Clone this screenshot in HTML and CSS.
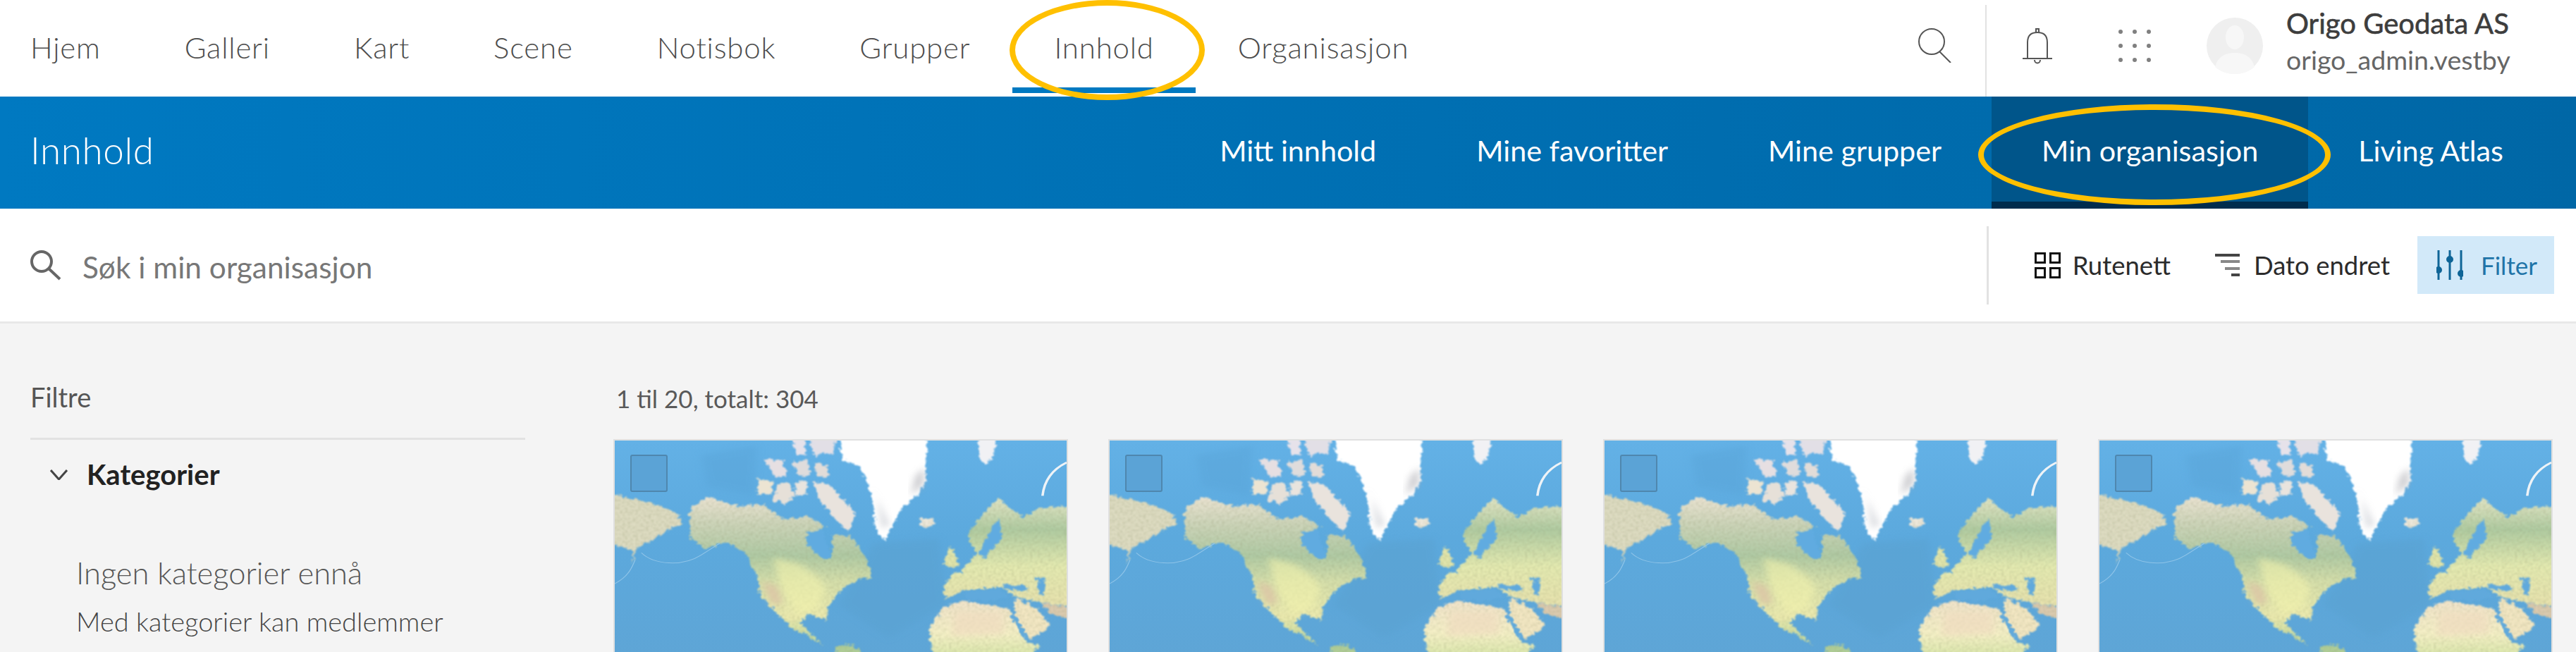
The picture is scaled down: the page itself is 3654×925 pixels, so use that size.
FILE: index.html
```html
<!DOCTYPE html>
<html lang="no">
<head>
    <meta charset="UTF-8">
    <title>Innhold</title>
    <link rel="stylesheet" href="styles.css">
</head>
<body>

    <!-- shared map thumbnail -->
    <svg class="defs" aria-hidden="true">
        <defs>
            <linearGradient id="ocean" x1="0" y1="0" x2="0" y2="1">
                <stop offset="0" stop-color="#63b1e6"/>
                <stop offset="0.45" stop-color="#5ca9dd"/>
                <stop offset="1" stop-color="#5ea5d6"/>
            </linearGradient>
            <linearGradient id="land-north" gradientUnits="userSpaceOnUse" x1="0" y1="300" x2="0" y2="900">
                <stop offset="0" stop-color="#efe6d6"/>
                <stop offset="0.2" stop-color="#cdd5ba"/>
                <stop offset="0.42" stop-color="#b0cba5"/>
                <stop offset="0.6" stop-color="#d6e0ac"/>
                <stop offset="0.85" stop-color="#eeecb0"/>
                <stop offset="1" stop-color="#c6dba0"/>
            </linearGradient>
            <linearGradient id="land-east" gradientUnits="userSpaceOnUse" x1="0" y1="330" x2="0" y2="780">
                <stop offset="0" stop-color="#dde3c2"/>
                <stop offset="0.25" stop-color="#b0cca2"/>
                <stop offset="0.6" stop-color="#e6ecb2"/>
                <stop offset="1" stop-color="#e9e2ae"/>
            </linearGradient>
            <linearGradient id="land-africa" gradientUnits="userSpaceOnUse" x1="0" y1="740" x2="0" y2="975">
                <stop offset="0" stop-color="#f3e5cd"/>
                <stop offset="0.6" stop-color="#f7f2c8"/>
                <stop offset="1" stop-color="#dbe8ac"/>
            </linearGradient>
            <filter id="rough" x="-5%" y="-5%" width="110%" height="110%" color-interpolation-filters="sRGB">
                <feTurbulence type="fractalNoise" baseFrequency="0.07" numOctaves="4" seed="4" result="noise"/>
                <feDisplacementMap in="SourceGraphic" in2="noise" scale="26" xChannelSelector="R" yChannelSelector="G"/>
                <feGaussianBlur stdDeviation="2.600"/>
            </filter>
            <filter id="mottled" x="-5%" y="-5%" width="110%" height="110%" color-interpolation-filters="sRGB">
                <feTurbulence type="fractalNoise" baseFrequency="0.07" numOctaves="4" seed="4" result="noise"/>
                <feDisplacementMap in="SourceGraphic" in2="noise" scale="26" xChannelSelector="R" yChannelSelector="G" result="shape"/>
                <feTurbulence type="fractalNoise" baseFrequency="0.12" numOctaves="2" seed="9"/>
                <feColorMatrix type="matrix" values="0 0 0 0 0.55  0 0 0 0 0.57  0 0 0 0 0.42  0.700 0 0 0 -0.280" result="specks"/>
                <feComposite in="specks" in2="shape" operator="in" result="spots"/>
                <feMerge result="merged">
                    <feMergeNode in="shape"/>
                    <feMergeNode in="spots"/>
                </feMerge>
                <feGaussianBlur in="merged" stdDeviation="2.600"/>
            </filter>
            <filter id="soft" x="-20%" y="-20%" width="140%" height="140%">
                <feGaussianBlur stdDeviation="12"/>
            </filter>
            <symbol id="world-map" viewBox="25 68 1442 907" preserveAspectRatio="none">
                <rect x="25" y="68" width="1442" height="907" fill="url(#ocean)"/>
                <path d="M300 130 L480 90 L470 300 L320 260 Z" fill="#5aa5d9" opacity="0.5" filter="url(#soft)"/>
                <path d="M850 500 1060 480 1080 760 900 900 740 760Z" fill="#5aa2d2" opacity="0.6" filter="url(#soft)"/>
                <g filter="url(#rough)">
                    <!-- arctic islands -->
                    <path d="M585 30H625L640 130 605 125Z" fill="#e6e2ea"/>
                    <path d="M645 30H735L722 125 690 120 660 140Z" fill="#e2dfe6"/>
                    <path d="M505 150 560 145 575 215 535 220Z" fill="#e6dfe2"/>
                    <path d="M590 160 640 150 650 215 610 215Z" fill="#dfdcdc"/>
                    <path d="M660 165 705 170 708 222 670 220Z" fill="#e2dcd8"/>
                    <path d="M482 228 530 240 525 295 480 290Z" fill="#ece4d2"/>
                    <path d="M545 250 585 245 600 300 570 335 530 320Z" fill="#e6e0d8"/>
                    <path d="M600 245 640 235 635 295 605 300Z" fill="#e9e4de"/>
                    <path d="M655 240 705 250 770 340 795 382 770 450 730 400 680 320Z" fill="#e9e3dd"/>
                    <path d="M1182 30H1240L1238 135 1200 170 1188 120Z" fill="#f1f1f4"/>
                    <!-- greenland -->
                    <path d="M750 30H1022L1018 150 1018 240 988 300 948 340 912 420 885 490 858 440 848 320 825 220 795 170 755 150 745 110Z" fill="#ffffff"/>
                </g>
                <g filter="url(#mottled)">
                    <!-- north america -->
                    <path d="M268 345 325 305 420 345 500 335 560 400 640 385 700 430 635 480 690 560 715 565 722 462 780 470 830 570 845 640 800 655 745 700 705 765 702 825 640 795 618 835 650 880 692 935 640 885 590 860 530 775 490 725 480 640 440 540 380 492 320 525 270 485 262 410Z" fill="url(#land-north)"/>
                    <path d="M720 1010 730 935 785 925 850 1010Z" fill="#b0cf98"/>
                    <!-- east asia on the left edge -->
                    <path d="M-10 280 70 310 150 330 222 372 240 415 190 450 140 492 100 515 78 592 85 530 -10 492Z" fill="#dedcc2"/>
                    <!-- iceland -->
                    <path d="M1000 395 1042 395 1045 420 1020 440 1000 420Z" fill="#efe9dc"/>
                    <!-- eurasia -->
                    <path d="M1500 340 1380 350 1330 392 1250 310 1200 372 1150 470 1180 540 1130 620 1100 632 1072 690 1082 735 1135 700 1260 682 1300 722 1380 750 1500 770Z" fill="url(#land-east)"/>
                    <path d="M1072 590 1095 510 1125 590 1105 602Z" fill="#e2e6ac"/>
                    <!-- africa and arabia -->
                    <path d="M1030 860 1072 770 1140 740 1285 775 1295 820 1340 915 1378 930 1330 1010H1050L1030 910Z" fill="url(#land-africa)"/>
                    <path d="M1302 730 1370 770 1418 850 1350 905 1300 810Z" fill="#f4e8c4"/>
                    <path d="M1390 752 1500 775V825L1410 795Z" fill="#dccbb0"/>
                </g>
                <!-- colour inside the continents -->
                <path d="M530 560 620 590 680 650 700 700 670 780 610 800 560 710Z" fill="#f3f3ad" opacity="0.6" filter="url(#soft)"/>
                <path d="M495 660 540 680 560 750 530 760Z" fill="#dcc7a6" filter="url(#soft)"/>
                <path d="M860 300 880 440 900 420 845 260Z" fill="#b8bcc4" opacity="0.6" filter="url(#soft)"/>
                <path d="M985 220 1012 180 1010 250 970 300Z" fill="#a8a8ae" opacity="0.6" filter="url(#soft)"/>
                <path d="M1110 790 1260 790 1270 880 1100 890Z" fill="#f0dcc0" opacity="0.7" filter="url(#soft)"/>
                <g filter="url(#rough)">
                    <path d="M640 450 690 440 715 560 690 570 640 510Z" fill="#60abe0"/>
                    <path d="M1232 425 1252 400 1262 480 1205 560 1185 545Z" fill="#60abe0"/>
                    <path d="M1140 705 1250 690 1290 725 1210 745 1150 735Z" fill="#60a9dc"/>
                    <path d="M1265 672 1340 680 1340 700 1270 695Z" fill="#60a9dc"/>
                    <path d="M1372 640 1400 650 1392 722 1376 700Z" fill="#60a9dc"/>
                    <path d="M1292 805 1300 800 1345 905 1335 910Z" fill="#60a9dc"/>
                </g>
                <path d="M1467 160C1420 190 1395 240 1390 300" fill="none" stroke="#eef3f7" stroke-width="8"/>
                <path d="M25 670C70 640 80 600 90 570M110 540C150 590 240 600 300 550L360 500" fill="none" stroke="#8fc4e8" stroke-width="3"/>
            </symbol>
        </defs>
    </svg>

    <header class="top-bar">
        <nav class="top-nav">
            <a href="#">Hjem</a>
            <a href="#">Galleri</a>
            <a href="#">Kart</a>
            <a href="#">Scene</a>
            <a href="#">Notisbok</a>
            <a href="#">Grupper</a>
            <a href="#" class="active">Innhold</a>
            <a href="#">Organisasjon</a>
        </nav>
        <div class="top-tools">
            <svg class="icon-search" viewBox="0 0 48 49"><circle cx="20" cy="19" r="18"/><path d="M31 33 47 49"/></svg>
            <span class="tool-divider"></span>
            <svg class="icon-bell" viewBox="0 0 44 52"><path d="M8 43V21C8 11 14 7 22 7S36 11 36 21V43M1 44H43M18 46C18 52 26 52 26 46M20 7V2H24V7"/></svg>
            <svg class="icon-apps" viewBox="0 0 46 46"><circle cx="3" cy="3" r="3"/><circle cx="23" cy="3" r="3"/><circle cx="43" cy="3" r="3"/><circle cx="3" cy="23" r="3"/><circle cx="23" cy="23" r="3"/><circle cx="43" cy="23" r="3"/><circle cx="3" cy="43" r="3"/><circle cx="23" cy="43" r="3"/><circle cx="43" cy="43" r="3"/></svg>
            <svg class="avatar" viewBox="0 0 80 80"><circle cx="40" cy="40" r="40" fill="#efefef"/><ellipse cx="40" cy="28" rx="13" ry="17" fill="#f7f7f7"/><path d="M12 70C16 54 28 50 40 50S64 54 68 70C60 77 50 80 40 80S20 77 12 70Z" fill="#f7f7f7"/></svg>
            <div class="user">
                <div class="user-name">Origo Geodata AS</div>
                <div class="user-id">origo_admin.vestby</div>
            </div>
        </div>
    </header>

    <div class="sub-bar">
        <div class="sub-title">Innhold</div>
        <nav class="sub-nav">
            <a href="#">Mitt innhold</a>
            <a href="#">Mine favoritter</a>
            <a href="#">Mine grupper</a>
            <a href="#" class="active">Min organisasjon</a>
            <a href="#">Living Atlas</a>
        </nav>
    </div>

    <div class="toolbar">
        <div class="search">
            <svg class="icon-find" viewBox="0 0 46 44"><circle cx="17" cy="17" r="14"/><path d="M27 27 43 42"/></svg>
            <span>Søk i min organisasjon</span>
        </div>
        <div class="view-tools">
            <span class="view-divider"></span>
            <a href="#" class="view-btn grid">
                <svg class="icon-tiles" viewBox="0 0 37 37"><rect x="1.500" y="1.500" width="13" height="13"/><rect x="22.500" y="1.500" width="13" height="13"/><rect x="1.500" y="22.500" width="13" height="13"/><rect x="22.500" y="22.500" width="13" height="13"/></svg>
                Rutenett
            </a>
            <a href="#" class="view-btn sort">
                <svg class="icon-sort" viewBox="0 0 35 32"><path d="M0 2H35" stroke="#444"/><path d="M8 11H35" stroke="#888"/><path d="M14 21H35" stroke="#888"/><path d="M23 30H35" stroke="#444"/></svg>
                Dato endret
            </a>
            <a href="#" class="view-btn filter">
                <svg class="icon-filter" viewBox="0 0 38 42"><path d="M3 0V42M19 0V42M35 0V42"/><circle cx="3" cy="28" r="3.500"/><circle cx="19" cy="13" r="3.500"/><circle cx="35" cy="33" r="3.500"/></svg>
                Filter
            </a>
        </div>
    </div>

    <main class="page">
        <aside class="filters">
            <h3>Filtre</h3>
            <div class="filter-head">
                <svg class="icon-chevron" viewBox="0 0 25 15"><path d="M1 1 12.500 14 24 1"/></svg>
                <span>Kategorier</span>
            </div>
            <p class="empty-title">Ingen kategorier ennå</p>
            <p class="empty-text">Med kategorier kan medlemmer</p>
        </aside>
        <section class="results">
            <div class="count">1 til 20, totalt: 304</div>
            <div class="cards">
                <div class="card"><svg class="map"><use href="#world-map"/></svg><span class="check"></span></div>
                <div class="card"><svg class="map"><use href="#world-map"/></svg><span class="check"></span></div>
                <div class="card"><svg class="map"><use href="#world-map"/></svg><span class="check"></span></div>
                <div class="card"><svg class="map"><use href="#world-map"/></svg><span class="check"></span></div>
            </div>
        </section>
    </main>

    <!-- yellow hand-drawn callouts -->
    <span class="callout callout-nav"></span>
    <span class="callout callout-sub"></span>

</body>
</html>
```

FILE: styles.css
```css
/* General */
html, body {
    margin: 0;
    height: 925px;
    overflow: hidden;
}

body {
    position: relative;
    font-family: 'Lato', sans-serif;
    font-weight: 300;
    background: #f4f4f4;
    color: #4c4c4c;
}

a {
    color: inherit;
    text-decoration: none;
}

.defs {
    position: absolute;
    width: 0;
    height: 0;
}

/* Top bar */
.top-bar {
    display: flex;
    justify-content: space-between;
    align-items: center;
    box-sizing: border-box;
    height: 137px;
    padding-left: 43px;
    background: #fff;
}

.top-nav {
    display: flex;
    gap: 119px;
    font-size: 42px;
    letter-spacing: 0.8px;
}

.top-nav a {
    position: relative;
    margin-top: -4px;
}

.top-nav a.active::after {
    content: "";
    position: absolute;
    left: -59px;
    right: -59px;
    bottom: -40px;
    height: 8px;
    background: #0079c1;
}

.top-tools {
    display: flex;
    align-items: center;
    box-sizing: border-box;
    height: 100%;
    padding-bottom: 8px;
}

.top-tools svg {
    flex: none;
    fill: none;
    stroke: #555;
    stroke-width: 2;
}

.icon-search {
    width: 48px;
    height: 49px;
    margin-right: 48px;
}

.tool-divider {
    align-self: flex-start;
    width: 2px;
    height: 130px;
    margin-top: 7px;
    background: #e2e2e2;
}

.icon-bell {
    width: 44px;
    height: 52px;
    margin-left: 50px;
}

.top-tools .icon-apps {
    width: 46px;
    height: 46px;
    margin-left: 93px;
    fill: #808080;
    stroke: none;
}

.top-tools .avatar {
    width: 80px;
    height: 80px;
    margin-left: 79px;
    stroke: none;
}

.user {
    align-self: flex-start;
    box-sizing: border-box;
    width: 444px;
    padding: 8px 0 0 33px;
}

.user-name {
    font-size: 40px;
    font-weight: 400;
    color: #3d3d3d;
    line-height: 50px;
    -webkit-text-stroke: 0.6px #3d3d3d;
}

.user-id {
    font-size: 37.500px;
    font-weight: 400;
    color: #666;
    line-height: 54px;
}

/* Blue bar */
.sub-bar {
    display: flex;
    justify-content: space-between;
    align-items: stretch;
    box-sizing: border-box;
    height: 159px;
    padding: 0 32px 0 43px;
    background: linear-gradient(90deg, #0079c1, #0067a6);
    color: #fff;
}

.sub-title {
    align-self: center;
    margin-top: -8px;
    font-size: 53px;
    font-weight: 300;
    letter-spacing: 0.6px;
}

.sub-nav {
    display: flex;
    font-size: 41.300px;
    font-weight: 400;
}

.sub-nav a {
    display: flex;
    align-items: center;
    padding: 0 71px 8px;
}

.sub-nav a.active {
    background: #00558a;
    box-shadow: inset 0 -10px 0 #002c4d;
}

/* Search and view options */
.toolbar {
    display: flex;
    justify-content: space-between;
    align-items: center;
    box-sizing: border-box;
    height: 163px;
    padding: 0 31px 0 42px;
    background: #fff;
    border-bottom: 3px solid #e8e8e8;
}

.search {
    display: flex;
    align-items: center;
    gap: 29px;
    font-size: 42.400px;
    font-weight: 400;
    color: #777;
}

.search span {
    margin-top: 5px;
}

.icon-find {
    width: 46px;
    height: 44px;
    fill: none;
    stroke: #666;
    stroke-width: 4;
}

.view-tools {
    display: flex;
    align-items: center;
}

.view-divider {
    width: 3px;
    height: 111px;
    margin-right: 65px;
    background: #e2e2e2;
}

.view-btn {
    display: flex;
    align-items: center;
    font-size: 36.500px;
    font-weight: 400;
    color: #2b2b2b;
}

.view-btn.grid {
    margin-right: 63px;
}

.view-btn.sort {
    margin-right: 39px;
}

.view-btn svg {
    flex: none;
    margin-right: 20px;
    fill: none;
}

.view-btn svg.icon-tiles {
    width: 37px;
    height: 37px;
    margin-right: 17px;
    stroke: #111;
    stroke-width: 3;
}

.icon-sort {
    width: 35px;
    height: 32px;
    stroke-width: 4;
}

.view-btn.filter {
    box-sizing: border-box;
    width: 194px;
    height: 82px;
    padding-left: 27px;
    font-size: 35px;
    font-weight: 400;
    background: #d2e9f9;
    color: #1f74a8;
}

.view-btn svg.icon-filter {
    width: 38px;
    height: 42px;
    margin-right: 25px;
    stroke: #0f6597;
    stroke-width: 3;
    fill: #0f6597;
}

/* Page content */
.page {
    display: flex;
    padding-left: 43px;
}

.filters {
    width: 702px;
    flex: none;
}

.filters h3 {
    margin: 0;
    height: 165px;
    box-sizing: border-box;
    padding-top: 80px;
    font-size: 38px;
    font-weight: 400;
    line-height: 48px;
    color: #555;
    border-bottom: 3px solid #e2e2e2;
}

.filter-head {
    display: flex;
    align-items: center;
    padding: 24px 0 0 28px;
    gap: 27px;
    font-size: 40px;
    font-weight: 700;
    color: #222;
    line-height: 50px;
}

.icon-chevron {
    width: 25px;
    height: 15px;
    fill: none;
    stroke: #444;
    stroke-width: 3;
}

.empty-title {
    margin: 88px 0 0 65px;
    font-size: 43.500px;
    line-height: 52px;
    color: #555;
}

.empty-text {
    margin: 20px 0 0 65px;
    font-size: 38px;
    line-height: 46px;
    font-weight: 300;
    color: #444;
}

.results {
    flex: 1;
    margin-left: 125px;
}

.count {
    height: 164px;
    box-sizing: border-box;
    padding: 86px 0 0 4px;
    font-size: 35px;
    font-weight: 400;
    line-height: 40px;
    color: #595959;
}

.cards {
    display: grid;
    grid-template-columns: repeat(4, 645px);
    gap: 57px;
}

.card {
    position: relative;
    height: 310px;
    border: 2px solid #e0e0e0;
    box-sizing: border-box;
    background: #fff;
}

.map {
    display: block;
    width: 100%;
    height: 100%;
}

.check {
    position: absolute;
    top: 20px;
    left: 22px;
    box-sizing: border-box;
    width: 53px;
    height: 53px;
    border: 2px solid #4f87ae;
    border-radius: 3px;
    background: #5ba3d6;
}

/* Yellow callouts */
.callout {
    position: absolute;
    box-sizing: border-box;
    border: 8px solid #ffc000;
    border-radius: 50%;
}

.callout-nav {
    left: 1432px;
    top: 0;
    width: 277px;
    height: 142px;
}

.callout-sub {
    left: 2806px;
    top: 148px;
    width: 500px;
    height: 143px;
}
```
